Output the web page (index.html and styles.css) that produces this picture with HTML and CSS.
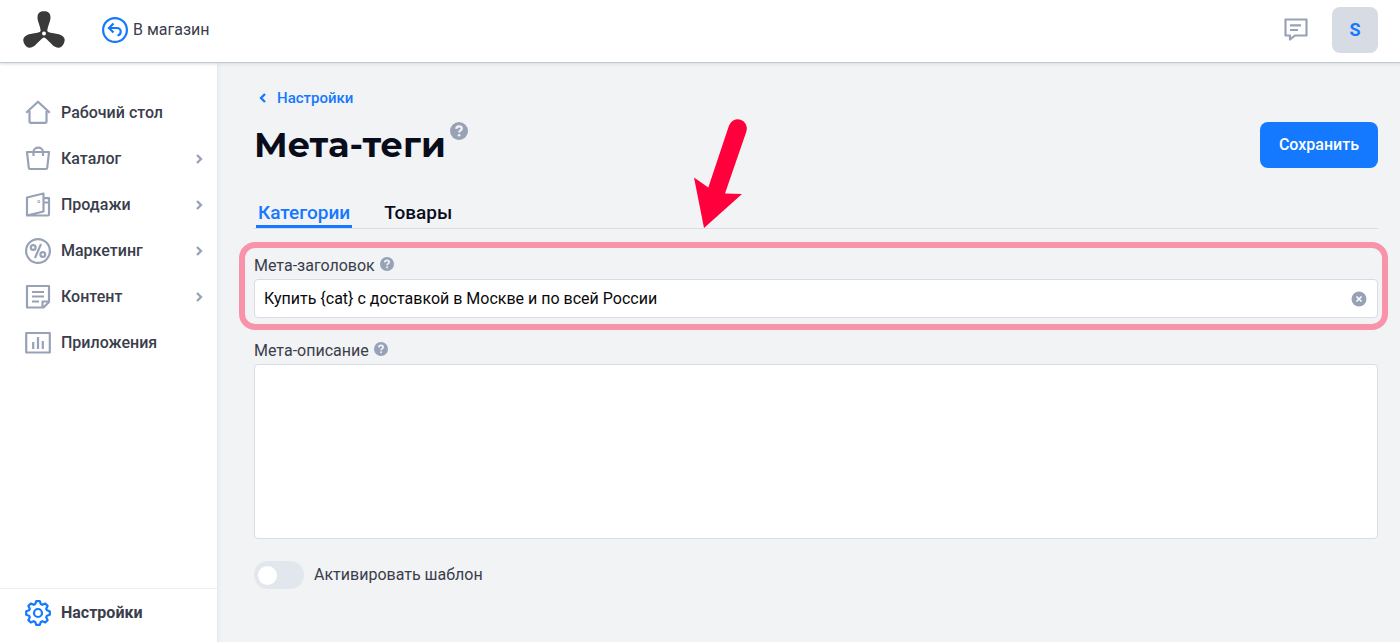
FILE: index.html
```html
<!DOCTYPE html>
<html lang="ru">
<head>
<meta charset="utf-8">
<meta name="viewport" content="width=device-width, initial-scale=1">
<title>Мета-теги</title>
<link rel="stylesheet" href="styles.css">
</head>
<body>
<svg class="sprite" aria-hidden="true">
  <symbol id="chevron" viewBox="0 0 8 10"><path d="M2 1l4 4-4 4" fill="none" stroke="currentColor" stroke-width="2.300"/></symbol>
  <symbol id="help" viewBox="0 0 18 18"><circle cx="9" cy="9" r="9" fill="currentColor"/><path d="M6.200 6.900c.1-1.700 1.200-2.600 2.800-2.600s2.800.9 2.800 2.300c0 1.900-2.600 1.900-2.600 4" fill="none" stroke="#f1f3f5" stroke-width="2.200"/><circle cx="9.100" cy="13.200" r="1.300" fill="#f1f3f5"/></symbol>
</svg>
<header class="topbar">
  <a class="logo" href="#" aria-label="Главная">
    <svg width="42" height="38" viewBox="0 0 42 38"><g fill="#393939"><path id="blade" d="M18 22.500C18 16 14.500 11 14.500 6.500C14.500 2 17 .3 21 .3S27.500 2 27.500 6.500C27.500 11 24 16 24 22.500Z"/><use href="#blade" transform="rotate(118 21 22.500)"/><use href="#blade" transform="rotate(242 21 22.500)"/><circle cx="21" cy="22.500" r="4"/></g><circle cx="21" cy="22.500" r="2" fill="#fff"/></svg>
  </a>
  <a class="shop-link" href="#">
    <svg width="26" height="26" viewBox="0 0 26 26" fill="none" stroke="#1479ff" stroke-width="2.200"><circle cx="13" cy="13" r="11.900"/><path d="M11.500 6.500L7 11l4.500 4.500M7 11h8a3.700 3.700 0 0 1 3.700 3.700c0 2-1.200 3.300-3.200 3.800"/></svg>
    <span>В магазин</span>
  </a>
  <button class="chat" type="button" aria-label="Сообщения">
    <svg width="24" height="24" viewBox="0 0 24 24" fill="none" stroke="#98a2b6" stroke-width="2.200"><path d="M1.500 1.500h21v16H11l-5 4v-4H1.500z" stroke-linejoin="round"/><path d="M6 7.300h11M6 12h8"/></svg>
  </button>
  <button class="avatar" type="button">S</button>
</header>
<div class="shell">
  <nav class="sidebar">
    <div class="menu">
      <a class="item" href="#"><svg class="icon" viewBox="0 0 26 26"><path d="M1.200 12.700L13 1.700l11.800 11M4.500 11v10.800q0 1 1 1h15q1 0 1-1V11"/></svg><span>Рабочий стол</span></a>
      <a class="item" href="#"><svg class="icon" viewBox="0 0 26 26"><path d="M2 6h22l-1.800 16q-.1 1-1.100 1H4.900q-1 0-1.100-1zM8.500 10V6c0-5.800 9.500-5.800 9.500 0V10"/></svg><span>Каталог</span><svg class="chevron"><use href="#chevron"/></svg></a>
      <a class="item" href="#"><svg class="icon" viewBox="0 0 26 26"><path d="M2 5.500L18.500 1.500v18L2 23.500zM2 23.500h21q1 0 1-1V6.200h-5.500M18.500 10.500H24"/><circle cx="13.800" cy="9.500" r=".4"/></svg><span>Продажи</span><svg class="chevron"><use href="#chevron"/></svg></a>
      <a class="item" href="#"><svg class="icon" viewBox="0 0 26 26"><circle cx="13" cy="13" r="11.900"/><circle cx="8.200" cy="9.500" r="2.400"/><circle cx="17.800" cy="16.500" r="2.400"/><path d="M16 6l-6 14"/></svg><span>Маркетинг</span><svg class="chevron"><use href="#chevron"/></svg></a>
      <a class="item" href="#"><svg class="icon" viewBox="0 0 26 26"><path d="M2 2h22v16l-5.500 5.500H2zM17.500 23.500v-6H24M7 8h12M7 12.500h12M7 17.500h7"/></svg><span>Контент</span><svg class="chevron"><use href="#chevron"/></svg></a>
      <a class="item" href="#"><svg class="icon" viewBox="0 0 26 26"><path d="M1.200 3h23.600v19.500H1.200zM8.200 12v7M13 7v12M17.800 11v8"/></svg><span>Приложения</span></a>
    </div>
    <a class="item settings" href="#"><svg class="icon" viewBox="0 0 26 26"><circle cx="13" cy="13" r="4"/><path d="M11.200 1.200h3.600l1 2.900 1.500.7 2.900-1.300 2.400 2.400-1.400 2.900.7 1.500 2.900 1v3.400l-2.900 1-.7 1.500 1.400 2.900-2.400 2.400-2.900-1.300-1.500.7-1 2.900h-3.600l-1-2.900-1.500-.7-2.900 1.300-2.400-2.400 1.400-2.900-.7-1.500-2.900-1v-3.400l2.900-1 .7-1.500-1.400-2.900 2.400-2.400 2.900 1.300 1.500-.7z"/></svg><span>Настройки</span></a>
  </nav>
  <main class="content">
    <a class="back" href="#"><svg width="8" height="10" viewBox="0 0 8 10"><path d="M6 1L2 5l4 4" fill="none" stroke="currentColor" stroke-width="2.300"/></svg><span>Настройки</span></a>
    <div class="heading">
      <h1>Мета-теги</h1>
      <svg class="help-large"><use href="#help"/></svg>
      <button class="save" type="button">Сохранить</button>
    </div>
    <div class="tabs">
      <button class="tab active" type="button">Категории</button>
      <button class="tab" type="button">Товары</button>
      <svg class="arrow" width="54" height="112" viewBox="0 0 54 112"><path d="M14 111L4 60.500 18.300 70.500 39 8.500A9.200 9.200 0 0 1 56.400 14.500L35 76.500 52 77z" fill="#ff003d"/></svg>
    </div>
    <form>
      <div class="field highlighted">
        <div class="caption"><label for="title">Мета-заголовок</label><svg class="help"><use href="#help"/></svg></div>
        <div class="input-wrap">
          <input id="title" type="text" value="Купить {cat} с доставкой в Москве и по всей России">
          <button class="clear" type="button" aria-label="Очистить"><svg width="16" height="16" viewBox="0 0 16 16"><circle cx="8" cy="8" r="7.500" fill="#98a2b6"/><path d="M5.500 5.500l5 5m0-5l-5 5" stroke="#fff" stroke-width="1.500"/></svg></button>
        </div>
      </div>
      <div class="field">
        <div class="caption"><label for="description">Мета-описание</label><svg class="help"><use href="#help"/></svg></div>
        <textarea id="description"></textarea>
      </div>
      <label class="switch"><input type="checkbox"><span>Активировать шаблон</span></label>
    </form>
  </main>
</div>
</body>
</html>
```
FILE: styles.css
```css
* { box-sizing: border-box; }
body {
  margin: 0;
  min-height: 100vh;
  display: flex;
  flex-direction: column;
  background: #f1f3f5;
  color: #3a3d4b;
  font: 16px/20px Roboto, "Liberation Sans", sans-serif;
}
a { color: inherit; text-decoration: none; }
button { border: 0; padding: 0; background: none; font: inherit; cursor: pointer; }
svg { display: block; flex: none; overflow: visible; }
.sprite { position: absolute; width: 0; height: 0; }

.topbar {
  position: relative;
  z-index: 1;
  height: 63px;
  padding: 0 22px 2px 23px;
  display: flex;
  align-items: center;
  background: #fff;
  border-bottom: 1px solid #c3cad1;
  box-shadow: 0 1px 3px #d5dadf;
}
.shop-link { display: flex; align-items: center; gap: 5px; margin-left: 37px; }
.chat { margin-left: auto; }
.avatar {
  width: 46px;
  height: 46px;
  margin-left: 24px;
  border-radius: 8px;
  background: #d7dbe3;
  color: #1479ff;
  font-size: 18px;
  font-weight: 700;
}

.shell { flex: 1; display: flex; }
.sidebar {
  width: 218px;
  flex: none;
  display: flex;
  flex-direction: column;
  justify-content: space-between;
  background: #fff;
  border-right: 1px solid #e6e9ed;
  box-shadow: 1px 0 3px #e8ebef;
}
.menu { padding-top: 27px; }
.item {
  height: 46px;
  padding: 0 14px 0 25px;
  display: flex;
  align-items: center;
  gap: 10px;
  font-weight: 500;
}
.icon { width: 26px; height: 26px; fill: none; stroke: #98a2b6; stroke-width: 2.2; stroke-linejoin: round; }
.chevron { width: 8px; height: 10px; margin-left: auto; color: #98a2b6; }
.settings { height: 54px; padding-bottom: 6px; border-top: 1px solid #eceff2; font-weight: 700; }
.settings .icon { stroke: #1479ff; }

.content { flex: 1; min-width: 0; padding: 25px 22px 24px 36px; }
.back { display: inline-flex; align-items: center; gap: 10px; padding-left: 5px; color: #1479ff; font-size: 15px; font-weight: 500; }
.heading { height: 46px; margin-top: 14px; display: flex; align-items: center; }
h1 { margin: 0; color: #090d1b; font: 700 35px/46px Montserrat, Inter, sans-serif; }
.help-large { width: 18px; height: 18px; margin-left: 4px; align-self: flex-start; color: #98a2b6; }
.save {
  height: 46px;
  margin-left: auto;
  padding: 0 19px;
  border-radius: 8px;
  background: #1479ff;
  color: #fff;
  font-weight: 500;
}
.tabs {
  position: relative;
  display: flex;
  gap: 30px;
  margin-top: 33px;
  padding-left: 2px;
  border-bottom: 1px solid #d9dee6;
}
.tab { height: 27px; padding: 0 2px 3px; color: #090d1b; font-size: 19px; font-weight: 500; }
.active { color: #1479ff; border-bottom: 3px solid #1479ff; padding-bottom: 0; }
.arrow { position: absolute; left: 436px; bottom: -1px; }

form { padding-top: 13px; }
.field { position: relative; margin-top: 20px; }
.caption { display: flex; gap: 5px; height: 26px; align-items: center; }
.help { width: 14px; height: 14px; margin-bottom: 5px; color: #98a2b6; }
.highlighted { margin-top: 11px; }
.highlighted::before {
  content: "";
  position: absolute;
  inset: -11px -10px -12px -15px;
  border: 6px solid #f893aa;
  border-radius: 16px;
  pointer-events: none;
}
.input-wrap { position: relative; }
input[type="text"], textarea {
  display: block;
  width: 100%;
  border: 1px solid #d7dce5;
  border-radius: 4px;
  background: #fff;
  color: #090909;
  font: inherit;
  outline: 0;
}
input[type="text"] { height: 39px; padding: 0 40px 0 9px; }
textarea { height: 175px; padding: 9px; resize: none; }
.clear { position: absolute; top: 12px; right: 11px; }
.switch { display: inline-flex; align-items: center; gap: 10px; margin-top: 22px; }
.switch input {
  appearance: none;
  display: flex;
  align-items: center;
  width: 50px;
  height: 28px;
  margin: 0;
  padding: 4px;
  border-radius: 14px;
  background: #e2e7ee;
}
.switch input::before { content: ""; width: 19px; height: 19px; border-radius: 50%; background: #fff; }
.switch input:checked { justify-content: flex-end; background: #1479ff; }
```
